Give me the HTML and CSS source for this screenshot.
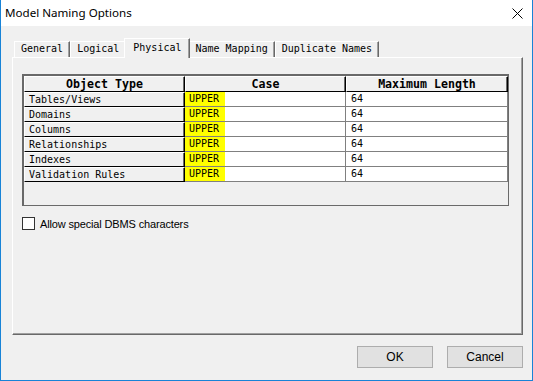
FILE: index.html
```html
<!DOCTYPE html>
<html lang="en">
<head>
  <meta charset="UTF-8">
  <title>Model Naming Options</title>
  <link rel="stylesheet" href="styles.css">
</head>
<body>
  <div class="window">
    <div class="titlebar">
      <span class="title">Model Naming Options</span>
      <svg class="close" width="11" height="11" viewBox="0 0 11 11">
        <path d="M0.5 0.5 L10.5 10.5 M10.5 0.5 L0.5 10.5" stroke="#000" stroke-width="1" fill="none"/>
      </svg>
    </div>

    <div class="dialog">
      <!-- Tabs -->
      <div class="tabs">
        <div class="tab">General</div>
        <div class="tab">Logical</div>
        <div class="tab active">Physical</div>
        <div class="tab">Name Mapping</div>
        <div class="tab">Duplicate Names</div>
      </div>

      <!-- Physical page -->
      <div class="panel">
        <div class="grid">
          <table>
            <thead>
              <tr>
                <th>Object Type</th>
                <th>Case</th>
                <th>Maximum Length</th>
              </tr>
            </thead>
            <tbody>
              <tr>
                <td class="name">Tables/Views</td>
                <td class="case"><span class="hl">UPPER</span></td>
                <td class="len">64</td>
              </tr>
              <tr>
                <td class="name">Domains</td>
                <td class="case"><span class="hl">UPPER</span></td>
                <td class="len">64</td>
              </tr>
              <tr>
                <td class="name">Columns</td>
                <td class="case"><span class="hl">UPPER</span></td>
                <td class="len">64</td>
              </tr>
              <tr>
                <td class="name">Relationships</td>
                <td class="case"><span class="hl">UPPER</span></td>
                <td class="len">64</td>
              </tr>
              <tr>
                <td class="name">Indexes</td>
                <td class="case"><span class="hl">UPPER</span></td>
                <td class="len">64</td>
              </tr>
              <tr>
                <td class="name">Validation Rules</td>
                <td class="case"><span class="hl">UPPER</span></td>
                <td class="len">64</td>
              </tr>
            </tbody>
          </table>
        </div>

        <label class="check">
          <span class="box"></span>
          Allow special DBMS characters
        </label>
      </div>

      <div class="buttons">
        <button type="button">OK</button>
        <button type="button">Cancel</button>
      </div>
    </div>
  </div>
</body>
</html>
```

FILE: styles.css
```css
html, body {
  margin: 0;
  padding: 0;
  background-color: #f0f0f0;
}
body {
  font-family: "Noto Sans", "Liberation Sans", sans-serif;
  font-size: 12px;
  color: #000;
}
.window {
  width: 533px;
  height: 381px;
  box-sizing: border-box;
  border: 1px solid #1883d7;
  border-top: none;
  background-color: #f0f0f0;
}
.titlebar {
  height: 26px;
  background-color: #fff;
  display: flex;
  align-items: center;
  justify-content: space-between;
  padding: 0 9px 0 4px;
}
.title {
  font-size: 11.6px;
  margin-top: -1px;
}
.close {
  margin-top: 1px;
}
.dialog {
  padding: 12px 9px 0 11px;
}

/* tabs */
.tabs {
  display: flex;
  align-items: flex-end;
  height: 19px;
  padding-left: 2px;
  font-family: "DejaVu Sans Mono", monospace;
  font-size: 10px;
}
.tab {
  height: 16px;
  box-sizing: border-box;
  padding: 0 6px;
  line-height: 14px;
  border-top: 1px solid #fff;
  border-left: 1px solid #fff;
  border-right: 1px solid #696969;
  box-shadow: inset -1px 0 #a0a0a0;
  white-space: nowrap;
}
.tab.active {
  position: relative;
  height: 20px;
  margin: 0 -2px -1px -2px;
  padding: 2px 8px 0 8px;
  background-color: #f0f0f0;
}

/* page */
.panel {
  height: 278px;
  box-sizing: border-box;
  padding: 16px 0 0 9px;
  border-top: 1px solid #fff;
  border-left: 1px solid #fff;
  border-right: 1px solid #696969;
  border-bottom: 1px solid #696969;
  box-shadow: inset -1px -1px #a0a0a0;
}
.grid {
  width: 487px;
  height: 132px;
  box-sizing: border-box;
  border-top: 2px solid #696969;
  border-left: 2px solid #696969;
  border-right: 1px solid #6a6a6a;
  border-bottom: 1px solid #6a6a6a;
  background-color: #f0f0f0;
}
table {
  table-layout: fixed;
  border-collapse: separate;
  border-spacing: 0;
  width: 484px;
  font-family: "DejaVu Sans Mono", monospace;
  font-size: 10px;
}
th, td {
  padding: 0;
  white-space: nowrap;
  overflow: hidden;
}
th {
  font-size: 11.6px;
  font-weight: bold;
  line-height: 14px;
  text-align: center;
  background-color: #f0f0f0;
  border-top: 1px solid #fff;
  border-left: 1px solid #fff;
  border-right: 1px solid #000;
  border-bottom: 1px solid #000;
  box-shadow: inset -1px 0 #696969;
}
th:nth-child(1), th:nth-child(2) {
  width: 159px;
}
td.name {
  line-height: 13px;
  padding-left: 4px;
  background-color: #f0f0f0;
  border-top: 1px solid #fff;
  border-left: 1px solid #fff;
  border-right: 1px solid #000;
  border-bottom: 1px solid #000;
  box-shadow: inset -1px 0 #696969;
}
td.case, td.len {
  line-height: 14px;
  background-color: #fff;
  border-right: 1px solid #808080;
  border-bottom: 1px solid #808080;
}
td.len {
  padding-left: 5px;
}
.hl {
  display: inline-block;
  vertical-align: top;
  height: 14px;
  padding: 0 6px 0 4px;
  background-color: #ffff00;
}

/* checkbox */
.check {
  display: flex;
  align-items: center;
  gap: 5px;
  margin-top: 11px;
  font-family: "Liberation Sans", sans-serif;
  font-size: 11px;
  letter-spacing: -0.15px;
}
.box {
  width: 13px;
  height: 13px;
  box-sizing: border-box;
  border: 1px solid #333;
  background-color: #fff;
}

/* dialog buttons */
.buttons {
  display: flex;
  justify-content: flex-end;
  gap: 14px;
  margin-top: 11px;
}
button {
  width: 76px;
  height: 22px;
  padding: 0;
  font-family: "Liberation Sans", sans-serif;
  font-size: 12px;
  color: #000;
  background-color: #e1e1e1;
  border: 1px solid #adadad;
}
```
